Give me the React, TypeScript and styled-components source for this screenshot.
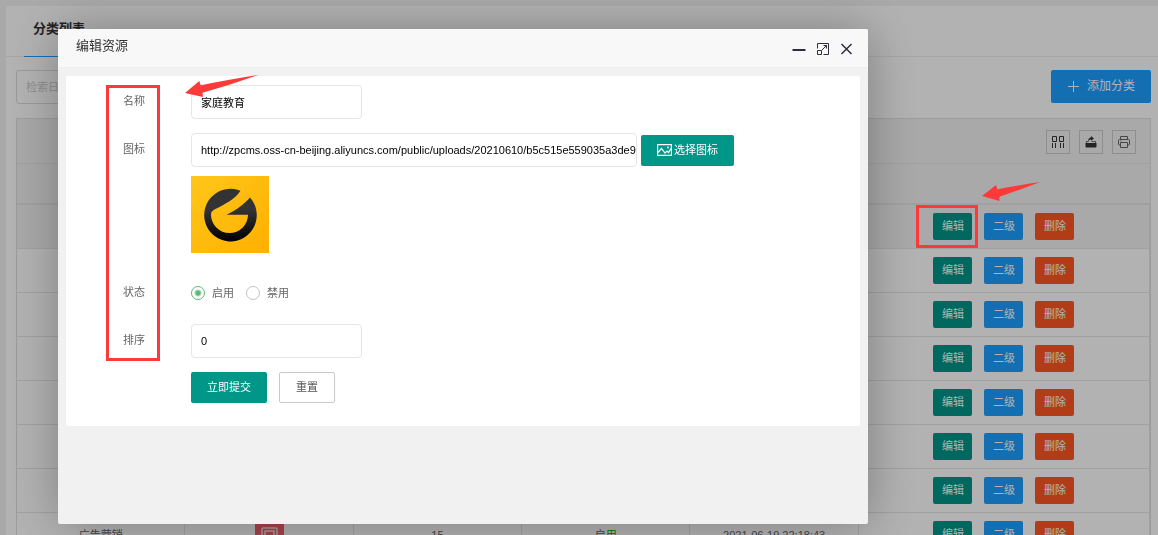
import React from "react";
import styled, { createGlobalStyle } from "styled-components";

const GlobalStyle = createGlobalStyle`
  *, *::before, *::after { box-sizing: border-box; }
  body {
    margin: 0;
    overflow: hidden;
    background: #f2f2f2;
    color: #666;
    font: 11px/16px "Liberation Sans", "Noto Sans CJK SC", sans-serif;
  }
  button, input { font: inherit; }
`;

const Page = styled.div`
  height: 100vh;
  overflow: hidden;
  padding: 6px 0 0 6px;
`;

const Card = styled.section`
  min-height: 100%;
  background: #fff;
`;

const CardHeader = styled.nav`
  display: flex;
  height: 51px;
  padding: 0 18px;
  border-bottom: 1px solid #eee;
`;

const Tab = styled.a`
  display: flex;
  align-items: center;
  height: 51px;
  padding: 0 9px 4px;
  border-bottom: 1px solid #1e9fff;
  color: #333;
  font-size: 13px;
  font-weight: 700;
  text-decoration: none;
`;

const CardBody = styled.div`
  padding: 13px 7px 0 10px;
`;

const SearchBar = styled.form`
  display: flex;
  justify-content: space-between;
  height: 33px;
  margin-bottom: 15px;
`;

const SearchInput = styled.input`
  width: 171px;
  height: 34px;
  padding: 0 9px;
  border: 1px solid #ddd;
  border-radius: 3px;
  &::placeholder { color: #ccc; opacity: 1; }
`;

const AddButton = styled.button`
  display: flex;
  align-items: center;
  justify-content: center;
  gap: 8px;
  width: 100px;
  padding: 0 0 2px;
  border: 0;
  border-radius: 2px;
  background: #1e9fff;
  color: #fff;
  font-size: 12px;
`;

const TableFrame = styled.div`
  border: 1px solid #e0e0e0;
`;

const TableTools = styled.div`
  display: flex;
  justify-content: flex-end;
  align-items: center;
  gap: 9px;
  height: 45px;
  padding: 2px 14px 0;
  border-bottom: 1px solid #e6e6e6;
  background: #f2f2f2;
`;

const ToolButton = styled.button`
  display: flex;
  align-items: center;
  justify-content: center;
  width: 24px;
  height: 24px;
  padding: 0;
  border: 1px solid #ccc;
  background: transparent;
  color: #333;
`;

const DataTable = styled.table`
  width: 100%;
  table-layout: fixed;
  border-collapse: separate;
  border-spacing: 0;
`;

const Col = styled.col<{ $wide?: boolean }>`
  width: ${(p) => (p.$wide ? "25.7%" : "auto")};
`;

const HeadRow = styled.tr`
  background: #f2f2f2;
`;

const HeadCell = styled.th`
  height: 41px;
  padding: 0;
  border-bottom: 2px solid #e6e6e6;
`;

const Row = styled.tr<{ $active?: boolean }>`
  background: ${(p) => (p.$active ? "#f2f2f2" : "#fff")};
`;

const Cell = styled.td<{ $green?: boolean }>`
  height: 44px;
  padding: 0;
  border-right: 1px solid #e6e6e6;
  border-bottom: 1px solid #e6e6e6;
  color: ${(p) => (p.$green ? "#00a800" : "#666")};
  text-align: center;
  vertical-align: middle;
`;

const Thumb = styled.svg`
  display: block;
  margin: 0 auto;
`;

const Actions = styled.div`
  display: flex;
  justify-content: center;
  gap: 12px;
`;

const ActionButton = styled.button<{ $color: string }>`
  width: 39px;
  height: 27px;
  padding: 0 0 1px;
  border: 0;
  border-radius: 2px;
  background: ${(p) => p.$color};
  color: #fff;
`;

const Shade = styled.div`
  position: fixed;
  inset: 0;
  background: rgba(0, 0, 0, 0.3);
`;

const Dialog = styled.div`
  position: fixed;
  top: 29px;
  bottom: 11px;
  left: 58px;
  right: 290px;
  border-radius: 2px;
  background: #f1f1f1;
  box-shadow: 1px 1px 50px rgba(0, 0, 0, 0.3);
`;

const DialogHeader = styled.header`
  display: flex;
  align-items: center;
  justify-content: space-between;
  height: 39px;
  padding: 0 14px 0 18px;
  border-bottom: 1px solid #eee;
  border-radius: 2px 2px 0 0;
  background: #f8f8f8;
`;

const DialogTitle = styled.h2`
  margin: 0;
  padding-bottom: 4px;
  color: #333;
  font-size: 13px;
  font-weight: 400;
`;

const WindowButtons = styled.div`
  display: flex;
  gap: 10px;
  padding-top: 2px;
`;

const WindowButton = styled.button`
  display: flex;
  padding: 0;
  border: 0;
  background: transparent;
  color: #2e2d3c;
`;

const EditForm = styled.form`
  display: flex;
  flex-direction: column;
  gap: 14px;
  margin: 8px;
  padding: 9px 0 23px;
  border-radius: 2px;
  background: #fff;
`;

const Field = styled.div`
  display: grid;
  grid-template-columns: 79px 1fr;
  column-gap: 46px;
`;

const FieldLabel = styled.label`
  padding-top: 8px;
  text-align: right;
`;

const Controls = styled.div<{ $gap?: number; $buttons?: boolean }>`
  display: flex;
  align-items: center;
  gap: ${(p) => p.$gap ?? 4}px;
  min-height: ${(p) => (p.$buttons ? 31 : 34)}px;
`;

const TextInput = styled.input<{ $long?: boolean }>`
  width: ${(p) => (p.$long ? 446 : 171)}px;
  height: 34px;
  padding: 0 0 0 9px;
  border: 1px solid #e6e6e6;
  border-radius: 4px;
  background: #fff;
  color: #000;
`;

const FormButton = styled.button<{ $plain?: boolean }>`
  display: flex;
  align-items: center;
  gap: 2px;
  height: 31px;
  padding: 0 16px 1px;
  border: ${(p) => (p.$plain ? "1px solid #c9c9c9" : "0")};
  border-radius: 2px;
  background: ${(p) => (p.$plain ? "#fff" : "#009688")};
  color: ${(p) => (p.$plain ? "#555" : "#fff")};
`;

const Preview = styled.svg`
  display: block;
  margin: 9px 0 9px;
`;

const RadioLabel = styled.label`
  display: flex;
  align-items: center;
  gap: 7px;
`;

const Radio = styled.input`
  appearance: none;
  width: 14px;
  height: 14px;
  margin: 0;
  border: 1px solid #c2c2c2;
  border-radius: 50%;
  &:checked {
    border-color: #5fb878;
    background: radial-gradient(circle, #5fb878 0 2px, transparent 4px);
  }
`;

const Mark = styled.div<{ $kind: "labels" | "edit" }>`
  position: fixed;
  border: 3px solid #fc3a3a;
  pointer-events: none;
  ${(p) =>
    p.$kind === "labels"
      ? "left: 106px; top: 85px; width: 54px; height: 276px;"
      : "right: 180px; top: 205px; width: 62px; height: 43px;"}
`;

const Arrow = styled.svg<{ $kind: "labels" | "edit" }>`
  position: fixed;
  pointer-events: none;
  ${(p) =>
    p.$kind === "labels" ? "left: 185px; top: 75px;" : "right: 118px; top: 182px;"}
`;

const rows = [1, 2, 3, 4, 5, 6, 7, 8];

function RowIcon() {
  return (
    <Thumb width="29" height="29" viewBox="0 0 29 29" aria-hidden="true">
      <rect width="29" height="29" fill="#f0606c" />
      <rect x="7" y="8" width="15" height="14" rx="1" fill="none" stroke="#f7dcdc" strokeWidth="1.5" />
      <rect x="10" y="11" width="9" height="8" fill="none" stroke="#f7dcdc" strokeWidth="1.5" />
    </Thumb>
  );
}

function TableRow({ index }: { index: number }) {
  const last = index === 8;
  return (
    <Row $active={index === 1}>
      <Cell>{last && "广告营销"}</Cell>
      <Cell>{last && <RowIcon />}</Cell>
      <Cell>{last && "15"}</Cell>
      <Cell $green>{last && "启用"}</Cell>
      <Cell>{last && "2021-06-19 22:18:43"}</Cell>
      <Cell>
        <Actions>
          <ActionButton $color="#009688">编辑</ActionButton>
          <ActionButton $color="#1e9fff">二级</ActionButton>
          <ActionButton $color="#ff5722">删除</ActionButton>
        </Actions>
      </Cell>
    </Row>
  );
}

function Logo() {
  return (
    <Preview width="78" height="77" viewBox="0 0 78 77" role="img">
      <defs>
        <linearGradient id="gold" x1="0" y1="0" x2="1" y2="1">
          <stop offset="0" stopColor="#ffc61a" />
          <stop offset="1" stopColor="#ffb000" />
        </linearGradient>
        <linearGradient id="ink" x1="0" y1="0" x2="0" y2="1">
          <stop offset="0.4" stopColor="#333" />
          <stop offset="1" stopColor="#000" />
        </linearGradient>
      </defs>
      <rect width="78" height="77" fill="url(#gold)" />
      <path
        fill="url(#ink)"
        d="M49.500 14.800A26.300 26.300 0 1 0 59 21.500C52 29 47 33 35.500 38.700H57A18.500 18.500 0 0 1 20 38.500Q20 35.500 23 33.800C34 28 43.500 24 49.500 14.800Z"
      />
    </Preview>
  );
}

export default function App() {
  return (
    <>
      <GlobalStyle />
      <Page>
        <Card>
          <CardHeader>
            <Tab href="#">分类列表</Tab>
          </CardHeader>
          <CardBody>
            <SearchBar>
              <SearchInput placeholder="检索日" />
              <AddButton type="button">
                <svg width="12" height="12" viewBox="0 0 12 12" stroke="currentColor" aria-hidden="true">
                  <path d="M6.500 1v11M1 6.500h11" />
                </svg>
                添加分类
              </AddButton>
            </SearchBar>
            <TableFrame>
              <TableTools>
                <ToolButton>
                  <svg width="12" height="12" viewBox="0 0 12 12" fill="none" stroke="currentColor">
                    <path d="M.5.5h4v5h-4zM7.500.5h4v5h-4zM.5 7v5M3.500 7v5M8.500 7v5M11.500 7v5" />
                  </svg>
                </ToolButton>
                <ToolButton>
                  <svg width="12" height="12" viewBox="0 0 12 12" fill="currentColor">
                    <path d="M.5 7h11v3.500a1 1 0 0 1-1 1h-9a1 1 0 0 1-1-1zM6 0l3 2.500-3 2.300V3.500C5 3.500 4 4 3 5.500 3 3 4.500 1.500 6 1.300z" />
                    <path d="M1.500 7V5.500h2M6.500 5.500h4V7" fill="none" stroke="currentColor" strokeWidth=".7" />
                  </svg>
                </ToolButton>
                <ToolButton>
                  <svg width="12" height="12" viewBox="0 0 12 12" fill="none" stroke="#666">
                    <path d="M2.500 3.500v-3h7v3M2.500 9h-1a1 1 0 0 1-1-1V4.500a1 1 0 0 1 1-1h9a1 1 0 0 1 1 1V8a1 1 0 0 1-1 1h-1M2.500 6.500h7v5h-7zM2.500 5h1" />
                  </svg>
                </ToolButton>
              </TableTools>
              <DataTable>
                <colgroup>
                  <Col />
                  <Col />
                  <Col />
                  <Col />
                  <Col />
                  <Col $wide />
                </colgroup>
                <thead>
                  <HeadRow>
                    <HeadCell colSpan={6} />
                  </HeadRow>
                </thead>
                <tbody>
                  {rows.map((n) => (
                    <TableRow key={n} index={n} />
                  ))}
                </tbody>
              </DataTable>
            </TableFrame>
          </CardBody>
        </Card>
      </Page>

      <Shade />

      <Dialog role="dialog" aria-labelledby="dialog-title">
        <DialogHeader>
          <DialogTitle id="dialog-title">编辑资源</DialogTitle>
          <WindowButtons>
            <WindowButton>
              <svg width="14" height="14" viewBox="0 0 14 14">
                <path d="M.5 8h13" stroke="currentColor" strokeWidth="2" />
              </svg>
            </WindowButton>
            <WindowButton>
              <svg width="14" height="14" viewBox="0 0 14 14" fill="none" stroke="currentColor">
                <path d="M1.500 6.500v-5h11v11h-5M1.500 8.500h4v4h-4zM6 8l4.500-4.500M7.500 3.500h3v3" />
              </svg>
            </WindowButton>
            <WindowButton>
              <svg width="14" height="14" viewBox="0 0 14 14" fill="none" stroke="currentColor" strokeWidth="1.500">
                <path d="M1.500 2l10 10M11.500 2l-10 10" />
              </svg>
            </WindowButton>
          </WindowButtons>
        </DialogHeader>

        <EditForm>
          <Field>
            <FieldLabel htmlFor="name">名称</FieldLabel>
            <Controls>
              <TextInput id="name" defaultValue="家庭教育" />
            </Controls>
          </Field>
          <Field>
            <FieldLabel htmlFor="icon">图标</FieldLabel>
            <div>
              <Controls>
                <TextInput
                  id="icon"
                  $long
                  defaultValue="http://zpcms.oss-cn-beijing.aliyuncs.com/public/uploads/20210610/b5c515e559035a3de991"
                />
                <FormButton type="button">
                  <svg width="15" height="12" viewBox="0 0 15 12" fill="none" stroke="currentColor" strokeWidth="1.200" aria-hidden="true">
                    <path d="M.6.6h13.800v10.800H.6zM1 8.500l3.500-4 3.500 4.500 2-2 1.500 1.500L14 4.500" />
                    <circle cx="11" cy="3.500" r=".4" />
                  </svg>
                  选择图标
                </FormButton>
              </Controls>
              <Logo />
            </div>
          </Field>
          <Field>
            <FieldLabel as="span">状态</FieldLabel>
            <Controls $gap={12}>
              <RadioLabel>
                <Radio type="radio" name="status" defaultChecked />
                启用
              </RadioLabel>
              <RadioLabel>
                <Radio type="radio" name="status" />
                禁用
              </RadioLabel>
            </Controls>
          </Field>
          <Field>
            <FieldLabel htmlFor="order">排序</FieldLabel>
            <Controls>
              <TextInput id="order" defaultValue="0" />
            </Controls>
          </Field>
          <Field>
            <span />
            <Controls $gap={12} $buttons>
              <FormButton type="submit">立即提交</FormButton>
              <FormButton type="reset" $plain>
                重置
              </FormButton>
            </Controls>
          </Field>
        </EditForm>
      </Dialog>

      <Mark $kind="labels" />
      <Mark $kind="edit" />
      <Arrow $kind="labels" width="73" height="22" viewBox="0 0 73 22" fill="#fc3a3a">
        <path d="M0 18L14.300 6 15.700 10.200Q48 4 73 0 45 10 17.500 17.800L18 22Z" />
      </Arrow>
      <Arrow $kind="edit" width="58" height="19" viewBox="0 0 58 19" fill="#fc3a3a">
        <path d="M0 14L14 3 15.400 7.300Q38 3 58 0 38 8 17.400 14.700V19Z" />
      </Arrow>
    </>
  );
}
